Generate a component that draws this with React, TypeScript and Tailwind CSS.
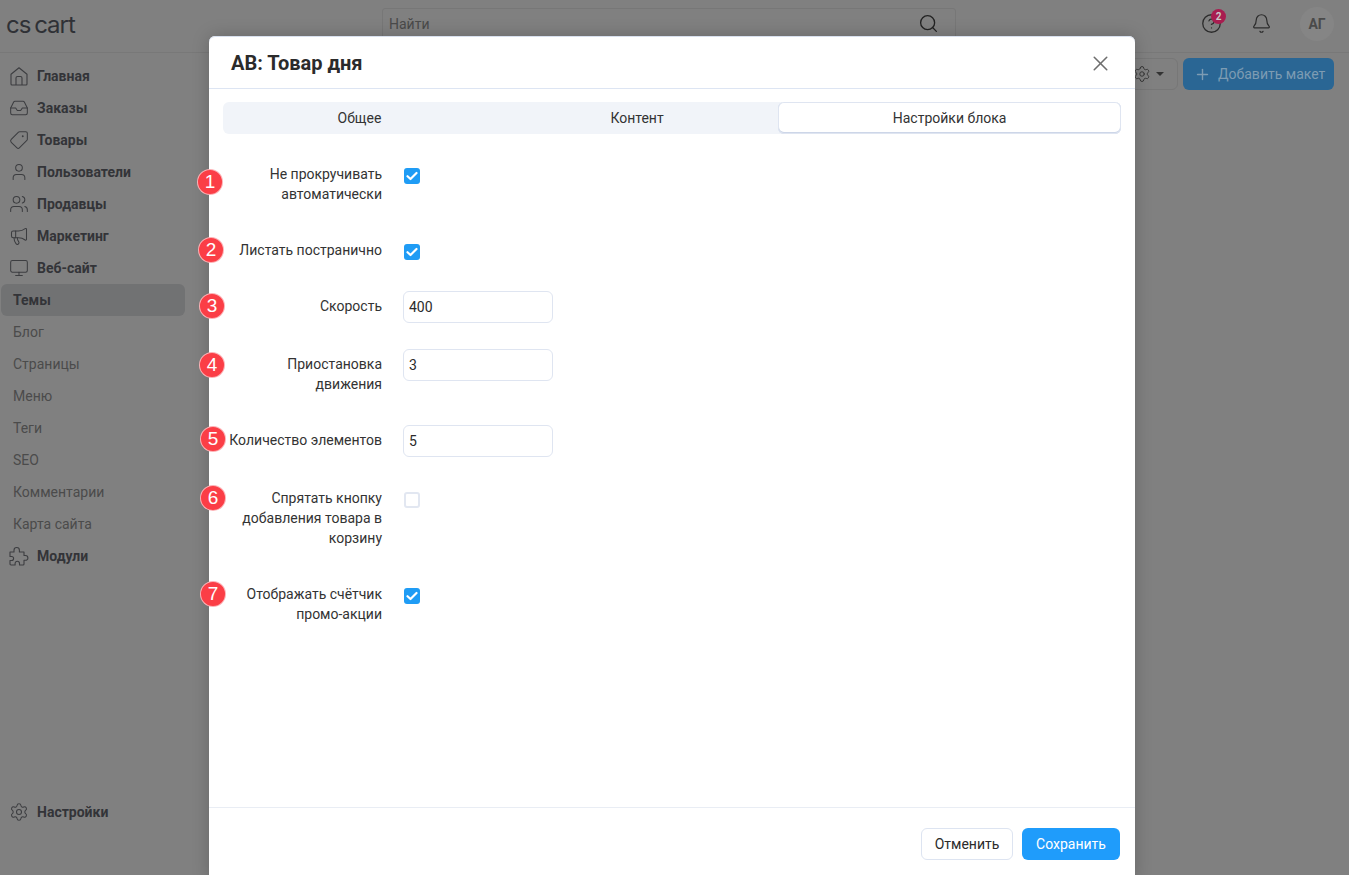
import type { ReactNode } from "react";
import { Bell, CircleHelp, Inbox, Megaphone, Monitor, Plus, Search, Settings, Tag, User, Users, X } from "lucide-react";

const iconCls = "text-[#3c3d40]";

function HouseIcon() {
  return (
    <svg width="20" height="20" viewBox="0 0 20 20" fill="none" stroke="currentColor" strokeWidth="1.1" strokeLinejoin="round" className={iconCls}>
      <path d="M2 8.2 10 1.8l8 6.4V18a1 1 0 0 1-1 1H3a1 1 0 0 1-1-1Z" />
      <path d="M7 19v-7a1.5 1.5 0 0 1 1.5-1.5h3A1.5 1.5 0 0 1 13 12v7" />
    </svg>
  );
}

function PuzzleIcon() {
  return (
    <svg width="20" height="20" viewBox="0 0 20 20" fill="none" stroke="currentColor" strokeWidth="1.1" strokeLinejoin="round" className={iconCls}>
      <path d="M1 6h4V4.2a2.7 2.7 0 0 1 5.4 0V6H15v3.5h1.5a2.4 2.4 0 0 1 0 4.8H15V18a1 1 0 0 1-1 1h-3.5v-1.5a2.2 2.2 0 0 0-4.4 0V19H2a1 1 0 0 1-1-1v-3.5h1.6a2 2 0 0 0 0-4H1Z" />
    </svg>
  );
}

const mainTop: { label: string; icon: ReactNode }[] = [
  { label: "Главная", icon: <HouseIcon /> },
  { label: "Заказы", icon: <Inbox size={20} strokeWidth={1.25} className={iconCls} /> },
  { label: "Товары", icon: <Tag size={20} strokeWidth={1.25} className={`${iconCls} -scale-x-100`} /> },
  { label: "Пользователи", icon: <User size={20} strokeWidth={1.25} className={iconCls} /> },
  { label: "Продавцы", icon: <Users size={20} strokeWidth={1.25} className={iconCls} /> },
  { label: "Маркетинг", icon: <Megaphone size={20} strokeWidth={1.25} className={iconCls} /> },
  { label: "Веб-сайт", icon: <Monitor size={20} strokeWidth={1.25} className={iconCls} /> },
];
const sub = ["Блог", "Страницы", "Меню", "Теги", "SEO", "Комментарии", "Карта сайта"];
const badges = [
  { n: 1, cls: "left-[197px] top-[169px]" },
  { n: 2, cls: "left-[198px] top-[237px]" },
  { n: 3, cls: "left-[199px] top-[293px]" },
  { n: 4, cls: "left-[199px] top-[352px]" },
  { n: 5, cls: "left-[200px] top-[426px]" },
  { n: 6, cls: "left-[200px] top-[485px]" },
  { n: 7, cls: "left-[200px] top-[581px]" },
];

function NavRow({ label, icon }: { label: string; icon: ReactNode }) {
  return (
    <div className="flex h-8 items-center">
      <span className="flex w-[36px] shrink-0 justify-center">{icon}</span>
      <span className="text-sm font-bold text-[#333438]">{label}</span>
    </div>
  );
}

function Box({ on }: { on: boolean }) {
  return on ? (
    <span className="mt-[9px] ml-[1px] flex h-4 w-4 items-center justify-center rounded-[3px] bg-[#1f9cf5]">
      <svg width="12" height="10" viewBox="0 0 12 10" fill="none" stroke="white" strokeWidth="2.2" strokeLinecap="round" strokeLinejoin="round">
        <path d="M1.5 5.2 4.5 8l6-6" />
      </svg>
    </span>
  ) : (
    <span className="mt-[9px] ml-[1px] h-4 w-4 rounded-[3px] border-2 border-[#e2e7f1] bg-white" />
  );
}

function Field({ value }: { value: string }) {
  return (
    <input
      readOnly
      value={value}
      className="h-8 w-[150px] rounded-md border border-[#dfe5f1] bg-white px-[5px] text-sm text-[#2b2b2b] outline-none"
    />
  );
}

function Row({ label, children }: { label: ReactNode; children: ReactNode }) {
  return (
    <div className="flex items-start">
      <div className="w-[154px] py-[5px] text-right text-sm leading-5 text-[#333]">{label}</div>
      <div className="ml-[21px] flex">{children}</div>
    </div>
  );
}

export default function App() {
  return (
    <div className="relative flex h-[875px] flex-col overflow-hidden bg-[#808080] font-['Roboto',sans-serif]">
      <header className="flex h-[53px] shrink-0 items-center border-b border-[#787878] pr-[15px]">
        <div className="w-[382px] pl-[6px] pb-[3px] font-['Inter',sans-serif] text-[24px] leading-none tracking-[-1px] [word-spacing:-2px] text-[#2f3136]">
          cs cart
        </div>
        <div className="mt-2 flex h-[31px] w-[574px] items-center justify-between self-start rounded-[3px] border border-[#777] pl-[6px] pr-4">
          <span className="text-sm text-[#4a4a4a]">Найти</span>
          <Search size={21} strokeWidth={1.5} className="text-[#222]" />
        </div>
        <div className="ml-auto flex items-center pb-[5px]">
          <div className="relative">
            <CircleHelp size={21} strokeWidth={1.5} className="text-[#2c2c2c]" />
            <span className="absolute -right-[4px] -top-[4px] flex h-[15px] w-[15px] items-center justify-center rounded-full bg-[#a81d50] text-[10px] font-bold text-[#c9c9c9]">2</span>
          </div>
          <Bell size={21} strokeWidth={1.4} className="ml-[29px] text-[#2c2c2c]" />
          <div className="ml-[28px] flex h-[34px] w-[34px] items-center justify-center rounded-full bg-[#858585] text-sm font-bold text-[#4a4a4a]">АГ</div>
        </div>
      </header>

      <div className="flex min-h-0 flex-1">
        <aside className="flex w-[195px] shrink-0 flex-col pt-[7px] pb-[47px] pl-[1px]">
          {mainTop.map((i) => <NavRow key={i.label} {...i} />)}
          <div className="flex h-8 w-[184px] items-center rounded-md bg-[#717273] pl-3 text-sm font-bold text-[#333438]">Темы</div>
          {sub.map((s) => (
            <div key={s} className="flex h-8 items-center pl-3 text-sm text-[#4b4b4b]">{s}</div>
          ))}
          <NavRow label="Модули" icon={<PuzzleIcon />} />
          <div className="mt-auto">
            <NavRow label="Настройки" icon={<Settings size={20} strokeWidth={1.25} className={iconCls} />} />
          </div>
        </aside>
        <main className="flex flex-1 justify-end gap-[5px] pt-[5px] pr-[15px]">
          <div className="flex h-8 w-[60px] items-center justify-end gap-[5px] rounded-md border border-[#777] pr-[13px]">
            <Settings size={18} strokeWidth={1.25} className="text-[#333]" />
            <span className="h-0 w-0 border-x-4 border-t-4 border-x-transparent border-t-[#333]" />
          </div>
          <div className="flex h-8 w-[151px] items-center rounded-md bg-[#2a6694] pl-[11px] text-sm text-[#7d9cb3]">
            <Plus size={17} strokeWidth={2} className="mr-[7px]" />
            Добавить макет
          </div>
        </main>
      </div>

      <section className="absolute left-[209px] top-9 flex h-[846px] w-[926px] flex-col rounded-md bg-white shadow-[0_0_18px_rgba(0,0,0,0.2),inset_0_1px_0_#d8e0ee]">
        <div className="flex h-[53px] shrink-0 items-center justify-between border-b border-[#dde5f3] pt-[2px] pl-[22px] pr-[22px]">
          <h1 className="text-xl font-bold text-[#2b2b2b]">АВ: Товар дня</h1>
          <X size={25} strokeWidth={1.5} className="text-[#6e6e6e]" />
        </div>
        <div className="mx-[14px] mt-[13px] flex h-8 shrink-0 rounded-md bg-[#f1f4f9] text-sm text-[#333]">
          <div className="flex flex-auto items-center justify-center">Общее</div>
          <div className="flex flex-auto items-center justify-center">Контент</div>
          <div className="flex flex-auto items-center justify-center rounded-md bg-white shadow-[inset_0_0_0_1px_#dfe5f1,inset_0_-1px_0_1px_#cdd6e8]">Настройки блока</div>
        </div>
        <div className="flex flex-1 flex-col gap-[26px] pt-[25px] pl-[19px]">
          <Row label={<>Не прокручивать<br />автоматически</>}><Box on /></Row>
          <Row label="Листать постранично"><Box on /></Row>
          <Row label="Скорость"><Field value="400" /></Row>
          <Row label={<>Приостановка<br />движения</>}><Field value="3" /></Row>
          <Row label="Количество элементов"><Field value="5" /></Row>
          <Row label={<>Спрятать кнопку<br />добавления товара в<br />корзину</>}><Box on={false} /></Row>
          <Row label={<>Отображать счётчик<br />промо-акции</>}><Box on /></Row>
        </div>
        <div className="flex h-[75px] shrink-0 items-start justify-end gap-[9px] border-t border-[#e9edf4] pt-5 pr-[15px] text-sm">
          <button className="h-8 w-[92px] rounded-md border border-[#dde4f1] bg-white text-[#2b2b2b]">Отменить</button>
          <button className="h-8 w-[98px] rounded-md bg-[#1f9cfb] text-white">Сохранить</button>
        </div>
      </section>

      {badges.map((b) => (
        <span key={b.n} className={`absolute flex h-[26px] w-[26px] items-center justify-center rounded-full border border-white/60 bg-[#fb3e46] font-['Liberation_Sans',sans-serif] text-[19px] text-white ${b.cls}`}>
          {b.n}
        </span>
      ))}
    </div>
  );
}
